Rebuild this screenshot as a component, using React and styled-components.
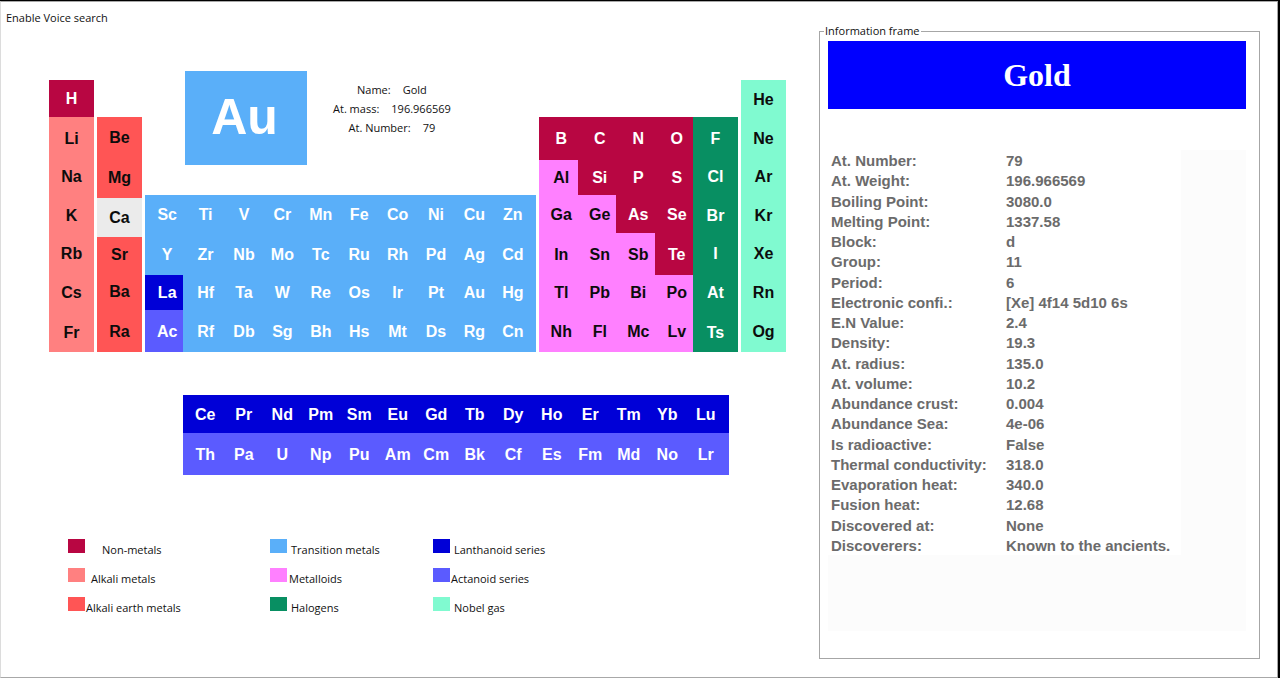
import React, { useState } from "react";
import styled, { createGlobalStyle } from "styled-components";

const colors = {
  nonmetal: "#b80642",
  alkali: "#ff8080",
  earth: "#ff5555",
  transition: "#5aaff9",
  metalloid: "#ff80ff",
  halogen: "#088f62",
  lanthanoid: "#0000d7",
  actinoid: "#5b5bff",
  noble: "#80fad0",
  hover: "#ebebeb",
};

const darkText = ["alkali", "earth", "metalloid", "noble", "hover"];

const GlobalStyle = createGlobalStyle`
  * { box-sizing: border-box; }
  body {
    margin: 0;
    background: #fff;
    color: #111;
    font-family: "Open Sans", "Noto Sans", sans-serif;
    font-size: 11px;
    line-height: 16px;
  }
  button { font: inherit; color: inherit; border: 0; padding: 0; cursor: pointer; }
`;

const Screen = styled.div`
  min-height: 100vh;
  display: flex;
  border-top: 1px solid #000;
  border-right: 2px solid #000;
`;

const Window = styled.div`
  flex: 1;
  min-width: 0;
  border: 1px solid #a8a8a8;
  border-left-color: #dcdcdc;
`;

const MenuBar = styled.nav`
  display: flex;
  padding: 8px 5px 0;
`;

const MenuButton = styled.button`
  background: none;
`;

const Main = styled.main`
  display: grid;
  grid-template-columns: 737fr 441fr;
  gap: 33px;
  padding: 0 17px 18px 48px;
`;

const TablePane = styled.section`
  padding-top: 45px;
  min-width: 0;
`;

const Groups = styled.div`
  display: grid;
  grid-template-columns: 45fr 45fr 391fr 199fr 45fr;
  gap: 3px;
  align-items: end;
`;

const Block = styled.div`
  display: grid;
  grid-template-columns: repeat(${(p) => p.$cols}, minmax(0, 1fr));
  grid-template-rows: ${(p) => p.$rows};
  background: ${(p) => colors[p.$kind]};
  padding-right: ${(p) => (p.$tail ? "7px" : 0)};
`;

const PBlock = styled.div`
  display: grid;
  grid-template-columns: 154fr 45fr;
`;

const Cell = styled.button`
  background: ${(p) => colors[p.$kind]};
  color: ${(p) => (darkText.includes(p.$kind) ? "#0c0c0c" : "#fff")};
  font: bold 16px/20px "Liberation Sans", Arial, sans-serif;
  && {
    padding-top: 1px;
    padding-left: ${(p) => (p.$inset ? "6px" : 0)};
  }
`;

const Selected = styled.div`
  display: flex;
  align-items: flex-start;
  padding-left: 40px;
  margin-bottom: 30px;
`;

const Tile = styled.div`
  width: 122px;
  height: 94px;
  padding-right: 3px;
  background: ${colors.transition};
  color: #fff;
  font: bold 50px/92px "Liberation Sans", Arial, sans-serif;
  text-align: center;
`;

const Facts = styled.dl`
  margin: 11px 0 0 26px;
  display: grid;
  gap: 3px;
`;

const Fact = styled.div`
  display: flex;
  justify-content: center;
  gap: 12px;
  dd { margin: 0; }
`;

const Series = styled.div`
  display: grid;
  grid-template-columns: 134fr 546fr 57fr;
  margin-top: 43px;
`;

const SeriesBody = styled.div`
  grid-column: 2;
`;

const Legend = styled.ul`
  list-style: none;
  margin: 64px 0 0;
  padding: 0 0 0 19px;
  display: grid;
  grid-template-columns: 202fr 163fr 353fr;
  grid-auto-rows: 29px;
`;

const LegendItem = styled.li`
  display: flex;
  align-items: flex-start;
`;

const Swatch = styled.span`
  width: 17px;
  height: 14px;
  background: ${(p) => colors[p.$kind]};
`;

const LegendText = styled.span`
  padding-top: 3px;
  padding-left: ${(p) => p.$indent}px;
`;

const InfoFrame = styled.fieldset`
  min-width: 0;
  margin: 0;
  padding: 5px 13px 27px 4px;
  border: 1px solid #a6a6a6;
  legend { padding: 0 1px; line-height: 10px; }
`;

const Banner = styled.h1`
  margin: 0 0 41px 4px;
  background: #0000ff;
  color: #fff;
  font: bold 32px/68px "Liberation Serif", serif;
  text-align: center;
`;

const Details = styled.div`
  margin-left: 4px;
  min-height: 481px;
  background: #fcfcfc;
`;

const DetailTable = styled.table`
  border-collapse: collapse;
  height: 405px;
  background: #fff;
  color: #6b6b6b;
  font: bold 15px/18px "Liberation Sans", Arial, sans-serif;
  th, td { padding: 2px 0 0 3px; text-align: left; white-space: nowrap; }
  th { width: 175px; }
  td { width: 178px; }
`;

const alkaliRows = "37px 42px 35px 42px 35px 42px 39px";
const earthRows = "40px 41px 39px 35px 38px 42px";
const transitionRows = "39px 41px 35px 42px";
const pRows = "43px 35px 38px 42px 35px 42px";
const halogenRows = "42px 35px 42px 35px 42px 39px";
const nobleRows = "39px 38px 39px 38px 39px 38px 41px";

const alkali = "H Li Na K Rb Cs Fr".split(" ");
const earth = "Be Mg Ca Sr Ba Ra".split(" ");
const transition =
  "Sc Ti V Cr Mn Fe Co Ni Cu Zn Y Zr Nb Mo Tc Ru Rh Pd Ag Cd La Hf Ta W Re Os Ir Pt Au Hg Ac Rf Db Sg Bh Hs Mt Ds Rg Cn".split(" ");
const pElements =
  "B C N O Al Si P S Ga Ge As Se In Sn Sb Te Tl Pb Bi Po Nh Fl Mc Lv".split(" ");
const halogens = "F Cl Br I At Ts".split(" ");
const nobles = "He Ne Ar Kr Xe Rn Og".split(" ");
const lanthanoids = "Ce Pr Nd Pm Sm Eu Gd Tb Dy Ho Er Tm Yb Lu".split(" ");
const actinoids = "Th Pa U Np Pu Am Cm Bk Cf Es Fm Md No Lr".split(" ");

const kinds = { H: "nonmetal", Ca: "hover", La: "lanthanoid", Ac: "actinoid" };
"B C N O Si P S As Se Te".split(" ").forEach((s) => { kinds[s] = "nonmetal"; });

const legend = [
  ["nonmetal", "Non-metals", 17],
  ["transition", "Transition metals", 4],
  ["lanthanoid", "Lanthanoid series", 4],
  ["alkali", "Alkali metals", 6],
  ["metalloid", "Metalloids", 2],
  ["actinoid", "Actanoid series", 1],
  ["earth", "Alkali earth metals", 1],
  ["halogen", "Halogens", 4],
  ["noble", "Nobel gas", 4],
];

const details = [
  ["At. Number:", "79"],
  ["At. Weight:", "196.966569"],
  ["Boiling Point:", "3080.0"],
  ["Melting Point:", "1337.58"],
  ["Block:", "d"],
  ["Group:", "11"],
  ["Period:", "6"],
  ["Electronic confi.:", "[Xe] 4f14 5d10 6s"],
  ["E.N Value:", "2.4"],
  ["Density:", "19.3"],
  ["At. radius:", "135.0"],
  ["At. volume:", "10.2"],
  ["Abundance crust:", "0.004"],
  ["Abundance Sea:", "4e-06"],
  ["Is radioactive:", "False"],
  ["Thermal conductivity:", "318.0"],
  ["Evaporation heat:", "340.0"],
  ["Fusion heat:", "12.68"],
  ["Discovered at:", "None"],
  ["Discoverers:", "Known to the ancients."],
];

function Elements({ symbols, kind, cols = 1, template, inset, tail }) {
  return (
    <Block $cols={cols} $rows={template} $kind={kind} $tail={tail}>
      {symbols.map((s) => (
        <Cell key={s} type="button" $kind={kinds[s] || kind} $inset={inset}>
          {s}
        </Cell>
      ))}
    </Block>
  );
}

export default function App() {
  const [listening, setListening] = useState(false);
  return (
    <Screen>
      <GlobalStyle />
      <Window>
        <MenuBar>
          <MenuButton type="button" aria-pressed={listening} onClick={() => setListening(!listening)}>
            Enable Voice search
          </MenuButton>
        </MenuBar>
        <Main>
          <TablePane>
            <Groups>
              <Elements symbols={alkali} kind="alkali" template={alkaliRows} />
              <Elements symbols={earth} kind="earth" template={earthRows} />
              <div>
                <Selected>
                  <Tile>Au</Tile>
                  <Facts>
                    <Fact><dt>Name:</dt><dd>Gold</dd></Fact>
                    <Fact><dt>At. mass:</dt><dd>196.966569</dd></Fact>
                    <Fact><dt>At. Number:</dt><dd>79</dd></Fact>
                  </Facts>
                </Selected>
                <Elements symbols={transition} kind="transition" cols={10} template={transitionRows} inset tail />
              </div>
              <PBlock>
                <Elements symbols={pElements} kind="metalloid" cols={4} template={pRows} inset />
                <Elements symbols={halogens} kind="halogen" template={halogenRows} />
              </PBlock>
              <Elements symbols={nobles} kind="noble" template={nobleRows} />
            </Groups>
            <Series>
              <SeriesBody>
                <Elements symbols={lanthanoids} kind="lanthanoid" cols={14} template="38px" inset tail />
                <Elements symbols={actinoids} kind="actinoid" cols={14} template="42px" inset tail />
              </SeriesBody>
            </Series>
            <Legend>
              {legend.map(([kind, text, indent]) => (
                <LegendItem key={kind}>
                  <Swatch $kind={kind} />
                  <LegendText $indent={indent}>{text}</LegendText>
                </LegendItem>
              ))}
            </Legend>
          </TablePane>
          <InfoFrame>
            <legend>Information frame</legend>
            <Banner>Gold</Banner>
            <Details>
              <DetailTable>
                <tbody>
                  {details.map(([name, value]) => (
                    <tr key={name}>
                      <th scope="row">{name}</th>
                      <td>{value}</td>
                    </tr>
                  ))}
                </tbody>
              </DetailTable>
            </Details>
          </InfoFrame>
        </Main>
      </Window>
    </Screen>
  );
}
